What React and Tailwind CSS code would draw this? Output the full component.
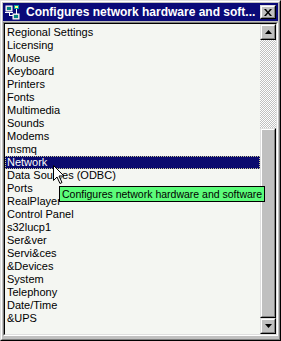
import React from 'react';

const items = [
  'Regional Settings', 'Licensing', 'Mouse', 'Keyboard', 'Printers', 'Fonts',
  'Multimedia', 'Sounds', 'Modems', 'msmq', 'Network', 'Data Sources (ODBC)',
  'Ports', 'RealPlayer', 'Control Panel', 's32lucp1', 'Ser&ver', 'Servi&ces',
  '&Devices', 'System', 'Telephony', 'Date/Time', '&UPS',
];

function Raised({ className, children }) {
  return (
    <div className={`border-t border-l border-t-[#dfdfdf] border-l-[#dfdfdf] border-b border-r border-b-black border-r-black ${className}`}>
      <div className="w-full h-full border-t border-l border-t-white border-l-white border-b border-r border-b-[#808080] border-r-[#808080] bg-[#c0c0c0] flex items-center justify-center">
        {children}
      </div>
    </div>
  );
}

export default function App() {
  return (
    <div className="relative w-[281px] h-[341px] bg-[#c0c0c0] font-['Liberation_Sans',Arial,sans-serif] border border-t-[#dfdfdf] border-l-[#dfdfdf] border-b-black border-r-black overflow-hidden">
      <div className="w-full h-full border border-t-white border-l-white border-b-[#808080] border-r-[#808080] p-px flex flex-col">
        {/* barra de titulo */}
        <div className="h-[18px] bg-[#0a0a78] flex items-center pl-[2px] pr-[2px] shrink-0">
          <svg width="16" height="16" viewBox="0 0 16 16" className="shrink-0">
            <rect x="1" y="2" width="6" height="5" fill="#c0c0c0" stroke="#fff" strokeWidth="1" />
            <rect x="2" y="3" width="4" height="3" fill="#008080" />
            <rect x="0" y="8" width="8" height="1" fill="#fff" />
            <rect x="9" y="1" width="5" height="4" fill="#00a0a0" />
            <rect x="10" y="2" width="3" height="2" fill="#ffff80" />
            <rect x="11" y="5" width="1" height="6" fill="#fff" />
            <rect x="8" y="10" width="6" height="5" fill="#c0c0c0" stroke="#fff" strokeWidth="1" />
            <rect x="9" y="11" width="4" height="3" fill="#008080" />
            <rect x="4" y="9" width="1" height="3" fill="#fff" />
            <rect x="4" y="11" width="4" height="1" fill="#fff" />
          </svg>
          <span className="ml-[5px] text-white font-bold text-[12px] leading-none whitespace-nowrap">Configures network hardware and soft...</span>
          <div className="flex-1" />
          <Raised className="w-[16px] h-[14px]">
            <svg width="8" height="7" viewBox="0 0 8 7">
              <path d="M0 0h2l2 2.5L6 0h2L5 3.5 8 7H6L4 4.5 2 7H0l3-3.5z" fill="#000" />
            </svg>
          </Raised>
        </div>

        {/* caixa da lista */}
        <div className="mt-px mb-[2px] flex-1 flex border-t border-l border-t-[#808080] border-l-[#808080] border-b border-r border-b-white border-r-white">
          <div className="flex-1 flex border-t border-l border-t-black border-l-black border-b border-r border-b-[#dfdfdf] border-r-[#dfdfdf] bg-[#f4f6f2]">
            <div className="flex-1 pt-[2px]">
              {items.map((it) => (
                <div
                  key={it}
                  className={`h-[13px] text-[11px] leading-[13px] pl-[2px] whitespace-nowrap ${it === 'Network' ? 'bg-[#0a0a6e] text-white outline outline-1 outline-dotted outline-[#c8c890] -outline-offset-1' : 'text-black'}`}
                >
                  {it}
                </div>
              ))}
            </div>
            {/* barra de rolagem */}
            <div className="w-[16px] flex flex-col">
              <Raised className="w-[16px] h-[16px]">
                <svg width="7" height="4" viewBox="0 0 7 4"><path d="M3.5 0L7 4H0z" fill="#000" /></svg>
              </Raised>
              <div className="h-[88px] bg-[repeating-conic-gradient(#c0c0c0_0%_25%,#ffffff_0%_50%)] bg-size-[2px_2px]" />
              <Raised className="w-[16px] flex-1" />
              <Raised className="w-[16px] h-[16px]">
                <svg width="7" height="4" viewBox="0 0 7 4"><path d="M0 0h7L3.5 4z" fill="#000" /></svg>
              </Raised>
            </div>
          </div>
        </div>
      </div>

      {/* cursor */}
      <svg className="absolute left-[52px] top-[164px]" width="12" height="20" viewBox="0 0 12 20">
        <path d="M0.5 0.5v15l3.5-3.5 3 6.5 2-1-3-6.5h5z" fill="#fff" stroke="#000" strokeWidth="1" />
      </svg>

      {/* dica */}
      <div className="absolute left-[58px] top-[185px] h-[16px] bg-[#5cfc7a] border border-black px-[2px] text-[10.5px] leading-[14px] text-black whitespace-nowrap">
        Configures network hardware and software
      </div>
    </div>
  );
}
